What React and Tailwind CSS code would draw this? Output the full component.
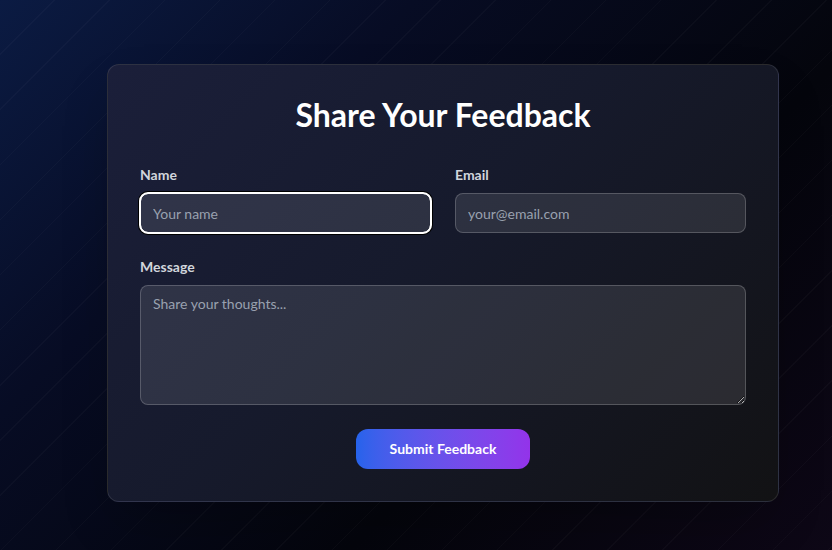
import React from 'react';

const App = () => {
  return (
    <div
      className="w-full h-screen overflow-hidden pl-[107px] pt-[64px] bg-[repeating-linear-gradient(135deg,transparent_0px,transparent_38px,rgba(255,255,255,0.025)_38px,rgba(255,255,255,0.025)_39px),linear-gradient(135deg,#0b1b43_0%,#070c24_30%,#04050c_65%,#0d0716_100%)]"
      style={{ fontFamily: 'Lato, "Noto Sans", sans-serif' }}
    >
      <div className="w-[672px] rounded-xl border border-white/10 bg-[linear-gradient(135deg,#1b1f3a_0%,#161a2c_45%,#121214_100%)] p-8 shadow-2xl">
        <h2 className="text-[32px] leading-9 font-bold text-white text-center mb-8">
          Share Your Feedback
        </h2>

        <div className="grid grid-cols-2 gap-6 mb-6">
          <div>
            <label className="block text-sm font-bold text-gray-300 mb-2">Name</label>
            <input
              type="text"
              placeholder="Your name"
              className="w-full h-10 px-3 text-sm rounded-lg bg-white/10 border border-white text-white placeholder:text-gray-400 outline-2 outline-offset-[-1px] outline-white shadow-[0_0_0_2px_#000]"
            />
          </div>
          <div>
            <label className="block text-sm font-bold text-gray-300 mb-2">Email</label>
            <input
              type="email"
              placeholder="your@email.com"
              className="w-full h-10 px-3 text-sm rounded-lg bg-white/10 border border-white/20 text-white placeholder:text-gray-400 focus:outline-none"
            />
          </div>
        </div>

        <div className="mb-6">
          <label className="block text-sm font-bold text-gray-300 mb-2">Message</label>
          <textarea
            placeholder="Share your thoughts..."
            className="block w-full h-[120px] px-3 py-2 text-sm rounded-lg bg-white/10 border border-white/20 text-white placeholder:text-gray-400 focus:outline-none"
          />
        </div>

        <div className="flex justify-center">
          <button className="w-[174px] h-10 rounded-xl bg-gradient-to-r from-[#2563eb] to-[#9333ea] text-white text-sm font-bold">
            Submit Feedback
          </button>
        </div>
      </div>
    </div>
  );
};

export default App;
